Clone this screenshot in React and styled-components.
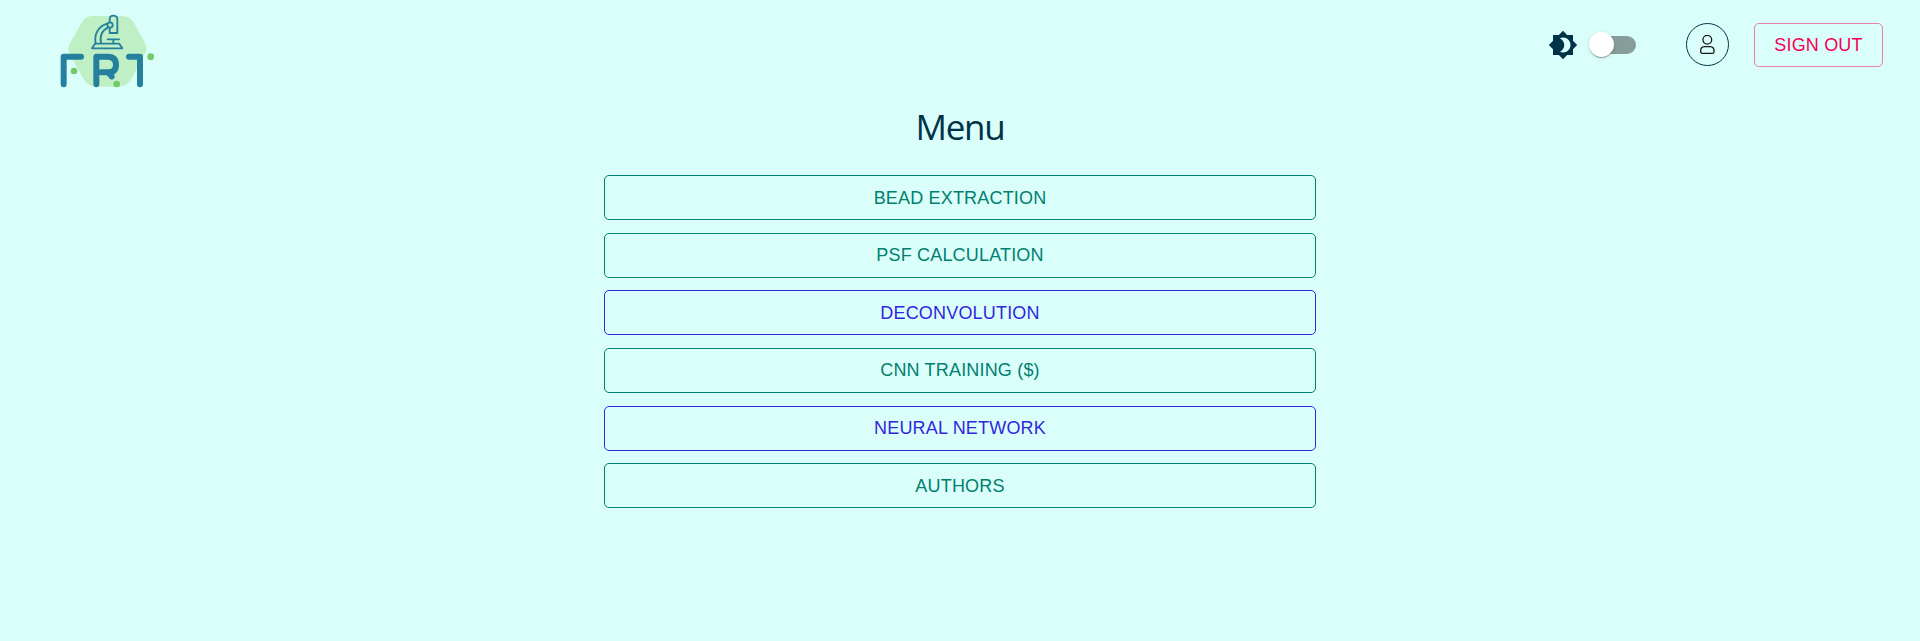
import React from "react";
import styled, { createGlobalStyle } from "styled-components";

const GlobalStyle = createGlobalStyle`
  body {
    margin: 0;
    background: #dafffb;
    color: #003347;
    font-family: "Liberation Sans", Arial, sans-serif;
  }
  *, *::before, *::after { box-sizing: border-box; }
`;

const Header = styled.header`
  display: flex;
  align-items: flex-start;
  justify-content: space-between;
  height: 95px;
  padding: 5px 37px 0 50px;
`;

const Logo = styled.svg`
  width: 115px;
  height: 90px;
`;

const Actions = styled.div`
  display: flex;
  align-items: center;
  height: 43px;
  margin-top: 18px;
`;

const ThemeIcon = styled.svg`
  width: 30px;
  height: 30px;
  fill: #003347;
`;

const Switch = styled.button`
  position: relative;
  display: flex;
  align-items: center;
  width: 47px;
  height: 25px;
  margin: 0 50px 0 11px;
  padding: 0;
  border: 0;
  background: transparent;
`;

const Track = styled.span`
  flex: 1;
  height: 18px;
  margin-left: 4px;
  border-radius: 9px;
  background: #869d9a;
`;

const Thumb = styled.span`
  position: absolute;
  left: 0;
  top: 0;
  width: 25px;
  height: 25px;
  border-radius: 50%;
  background: #fff;
  box-shadow: 0 2px 1px -1px rgba(0, 0, 0, 0.2), 0 1px 1px rgba(0, 0, 0, 0.14),
    0 1px 4px rgba(0, 0, 0, 0.12);
`;

const Avatar = styled.button`
  display: grid;
  place-items: center;
  width: 43px;
  height: 43px;
  margin-right: 25px;
  padding: 0;
  border: 1px solid #003347;
  border-radius: 50%;
  background: transparent;
`;

const UserIcon = styled.svg`
  display: block;
  width: 15px;
  height: 19px;
`;

const OutlinedButton = styled.button`
  flex-shrink: 0;
  height: ${(p) => p.$height || 45}px;
  width: ${(p) => p.$width || "100%"};
  padding: 0;
  border: 1px solid ${(p) => p.$border || p.$color};
  border-radius: 5px;
  background: transparent;
  color: ${(p) => p.$color};
  font: 400 18px/30px "Liberation Sans", Arial, sans-serif;
  letter-spacing: 0.18px;
  text-transform: uppercase;
`;

const Main = styled.main`
  display: flex;
  flex-direction: column;
  align-items: center;
`;

const Title = styled.h1`
  margin: 8px 0 24.2px;
  font: 400 35px/48px "Open Sans", "Noto Sans", sans-serif;
  letter-spacing: -1.3px;
`;

const MenuList = styled.nav`
  display: flex;
  flex-direction: column;
  gap: 12.6px;
  width: 712px;
`;

const GREEN = "#00806e";
const BLUE = "#3226dc";

const items = [
  ["Bead extraction", GREEN],
  ["PSF calculation", GREEN],
  ["Deconvolution", BLUE],
  ["CNN training ($)", GREEN],
  ["Neural network", BLUE],
  ["Authors", GREEN],
];

function BrandLogo() {
  return (
    <Logo viewBox="0 0 345 270" fill="none" strokeLinecap="round" strokeLinejoin="round">
      <path
        d="M126 33H218Q239 33 250 51L285 114Q294 130 285 145L244 223Q232 245 207 245H137Q113 245 101 223L59 148Q51 133 59 117L96 51Q106 33 126 33Z"
        fill="#bff0c5"
      />
      <g stroke="#24809c" strokeWidth="18">
        <path d="M41 238V155H93" />
        <path d="M237 155H270V238" />
        <path d="M139 238V155H174Q198 156 198 179Q198 202 174 202H153" />
        <path d="M176 203L185 214" />
      </g>
      <g stroke="#24809c" strokeWidth="5.5">
        <path d="M179 50V43Q179 32 190 32Q202 32 202 43V84H179V69" />
        <circle cx="180" cy="60" r="8" />
        <path d="M171 56C143 66 132 89 137 115M174 68C154 77 149 94 153 115" />
        <path d="M135 116H208L217 130H126Z" />
        <path d="M173 103H207M190 104V115" />
      </g>
      <g fill="#76c968">
        <circle cx="302" cy="155" r="10" />
        <circle cx="72" cy="198" r="10" />
        <circle cx="200" cy="237" r="10" />
      </g>
    </Logo>
  );
}

export default function App() {
  return (
    <>
      <GlobalStyle />
      <Header>
        <BrandLogo />
        <Actions>
          <ThemeIcon viewBox="0 0 24 24">
            <path d="M20 8.69V4h-4.69L12 .69 8.69 4H4v4.69L.69 12 4 15.31V20h4.69L12 23.31 15.31 20H20v-4.69L23.31 12 20 8.69zM12 18c-.89 0-1.74-.2-2.5-.55C11.56 16.5 13 14.42 13 12s-1.44-4.5-3.5-5.45C10.26 6.2 11.11 6 12 6c3.31 0 6 2.69 6 6s-2.69 6-6 6z" />
          </ThemeIcon>
          <Switch role="switch" aria-checked="false" aria-label="Dark mode">
            <Track />
            <Thumb />
          </Switch>
          <Avatar aria-label="Account">
            <UserIcon viewBox="0 0 15 19" fill="none" stroke="#151515" strokeWidth="1.3">
              <circle cx="7.3" cy="4.8" r="4.4" />
              <path d="M4.4 11.6H10.2Q14 11.8 14 15.8V16.7Q14 18.3 12.4 18.3H2.3Q0.7 18.3 0.7 16.7V15.8Q0.7 11.8 4.4 11.6Z" />
            </UserIcon>
          </Avatar>
          <OutlinedButton $width="129px" $height={44} $color="#f50057" $border="#e980a9">
            Sign out
          </OutlinedButton>
        </Actions>
      </Header>
      <Main>
        <Title>Menu</Title>
        <MenuList>
          {items.map(([label, color]) => (
            <OutlinedButton key={label} $color={color}>
              {label}
            </OutlinedButton>
          ))}
        </MenuList>
      </Main>
    </>
  );
}
